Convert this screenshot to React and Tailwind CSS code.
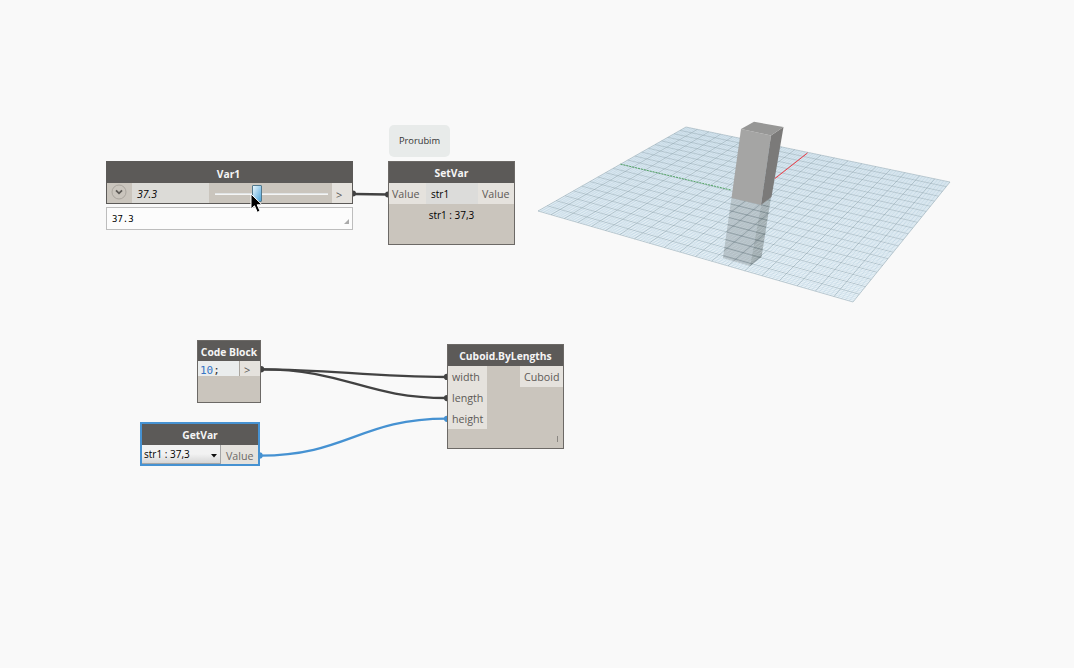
import React from "react";

const FONT = "font-['Open_Sans','Noto_Sans',sans-serif]";

// Projective map from the unit square onto the ground plane's four corners.
const A = [686, 127], B = [950, 182], C = [853, 302], D = [538, 211];
const sx = A[0] - B[0] + C[0] - D[0], sy = A[1] - B[1] + C[1] - D[1];
const dx1 = B[0] - C[0], dx2 = D[0] - C[0], dy1 = B[1] - C[1], dy2 = D[1] - C[1];
const det = dx1 * dy2 - dx2 * dy1;
const g = (sx * dy2 - dx2 * sy) / det, h = (dx1 * sy - sx * dy1) / det;
function project(u, v) {
  const w = g * u + h * v + 1;
  const x = ((B[0] - A[0] + g * B[0]) * u + (D[0] - A[0] + h * D[0]) * v + A[0]) / w;
  const y = ((B[1] - A[1] + g * B[1]) * u + (D[1] - A[1] + h * D[1]) * v + A[1]) / w;
  return x.toFixed(2) + " " + y.toFixed(2);
}
function gridPath(count, skip) {
  let d = "";
  for (let i = 0; i <= count; i++) {
    if (skip && i % skip === 0) continue;
    const t = i / count;
    d += `M${project(t, 0)}L${project(t, 1)}M${project(0, t)}L${project(1, t)}`;
  }
  return d;
}

function Ground() {
  return (
    <svg className="absolute inset-0" width="1074" height="668" viewBox="0 0 1074 668" fill="none">
      <defs>
        <clipPath id="submerged">
          <path d="M731.5 198L761 205L771 197L761.5 257L750 266L723 258Z" />
        </clipPath>
      </defs>
      <path d="M686 127L950 182L853 302L538 211Z" fill="#eaf3f8" />
      <path d={gridPath(100, 5)} stroke="#a9c6d6" strokeWidth=".5" opacity=".65" />
      <path d={gridPath(20, 0)} stroke="#7f98a5" strokeWidth=".7" opacity=".68" />
      <path d={`M${project(0, 0.5)}L731 190`} stroke="#54a666" strokeWidth="1" strokeDasharray="2 1" />
      <path d="M807.5 153L775 178.5" stroke="#f03c46" strokeWidth="1" />
      <path d="M731.5 198L761 205L750 266L723 258Z" fill="#899499" opacity=".55" />
      <path d="M761 205L771 197L761.5 257L750 266Z" fill="#697477" opacity=".6" />
      <g clipPath="url(#submerged)">
        <path d={gridPath(100, 5)} stroke="#dce6ea" strokeWidth=".5" opacity=".6" />
        <path d={gridPath(20, 0)} stroke="#6d7d85" strokeWidth=".7" opacity=".4" />
      </g>
      <path d="M741 129L771 135.5L761 205L731.5 198Z" fill="#a5a5a4" />
      <path d="M771 135.5L783.5 127L771.5 197L761 205Z" fill="#7b7a79" />
      <path d="M741 129L754 121.7L783.5 127L771 135.5Z" fill="#979796" />
    </svg>
  );
}

function Wires() {
  return (
    <svg className="absolute inset-0" width="1074" height="668" viewBox="0 0 1074 668" fill="none" strokeWidth="2.3">
      <g stroke="#424242">
        <path d="M354 194L388 194.5" />
        <path d="M262 369.3C330 369.3 370 377 447 377" />
        <path d="M262 369.3C345 369.3 365 398 447 398" />
      </g>
      <path d="M260 455.7C347 455.7 360 418.7 447 418.7" stroke="#4692d2" />
      <g fill="#424242">
        <path d="M353 190.5a3 3 0 0 1 0 6zM388 191.5a3 3 0 0 0 0 6zM261 366a3.2 3.2 0 0 1 0 6.4zM447 373.8a3 3 0 0 0 0 6.2zM447 395a3 3 0 0 0 0 6.2z" />
      </g>
      <path d="M259.5 452.3a3.2 3.2 0 0 1 0 6.4zM447 415.7a3 3 0 0 0 0 6.2z" fill="#4692d2" />
    </svg>
  );
}

function Header({ children, className }) {
  return (
    <div className={"flex items-center justify-center bg-[#5c5a58] text-[10.3px] font-bold leading-none whitespace-nowrap text-[#f5f5f5] " + className}>
      {children}
    </div>
  );
}

function VarNode() {
  return (
    <div className="absolute left-[106px] top-[161px] w-[247px]">
      <div className="h-[43px] border border-[#5c5a58] bg-[#cac5bd]">
        <Header className="h-[21px] pt-[3px] pr-[2px]">Var1</Header>
        <div className="flex h-5 items-stretch">
          <div className="flex w-[25px] items-center justify-center pr-[2px] pb-[2px]">
            <svg width="16" height="16" viewBox="0 0 16 16" fill="none">
              <circle cx="8" cy="8" r="7" stroke="#aaa59e" />
              <path d="M5 6.3L8 9.3L11 6.3" stroke="#5d5a56" strokeWidth="1.8" />
            </svg>
          </div>
          <div className="flex w-[77px] items-center bg-[#dcdbd7] pl-[5px] pt-[3px] text-[10.5px] italic leading-none text-black">37.3</div>
          <div className="relative flex flex-1 items-center pr-[4px] pl-[6px] pt-px">
            <div className="h-[2px] flex-1 border-b border-[#f5f5f4] bg-[#e1e4e5]" />
            <div className="absolute left-[43px] top-[2px] h-[17px] w-[10px] rounded-[1px] border border-[#52788c] bg-gradient-to-br from-[#e7f6fc] to-[#4ba6db]" />
          </div>
          <div className="flex w-[20px] items-center bg-[#e5e2dd] pl-[4px] pt-[2px] text-[11px] leading-none text-[#555]">&gt;</div>
        </div>
      </div>
      <div className="mt-[3px] flex h-[23px] items-center justify-between border border-[#bdbdbd] bg-[#fcfcfc] pl-[5px] pr-[3px]">
        <span className="pt-[2px] font-['DejaVu_Sans_Mono',monospace] text-[9px] leading-none text-black">37.3</span>
        <svg className="mt-[6px]" width="5" height="5"><path d="M5 0V5H0Z" fill="#aaa" /></svg>
      </div>
    </div>
  );
}

function SetVarNode() {
  return (
    <div className="absolute left-[388px] top-[161px] h-[84px] w-[127px] border border-[#6c6966] bg-[#cac5bd] text-[10.7px] leading-none">
      <Header className="h-[21px] pt-[2px]">SetVar</Header>
      <div className="flex h-[21px] bg-[#e5e2dd] text-[#5d5a57]">
        <div className="flex w-[37px] items-center pl-[3px] pt-[2px]">Value</div>
        <div className="flex w-[52px] items-center bg-[#dcdcda] pl-[5px] pt-px text-[10px] text-black">str1</div>
        <div className="flex flex-1 items-center pl-[4px] pt-[2px]">Value</div>
      </div>
      <div className="pt-[6px] text-center text-[10px] text-black">str1 : 37,3</div>
    </div>
  );
}

function CodeBlock() {
  return (
    <div className="absolute left-[197px] top-[340px] h-[63px] w-[64px] border border-[#6c6966] bg-[#cac5bd] leading-none">
      <Header className="h-[20px] pt-[2px]">Code Block</Header>
      <div className="flex h-[15px]">
        <div className="flex w-[42px] items-center border-r border-[#aaa69f] bg-[#eaeded] pl-[2px] pt-[3px] font-['DejaVu_Sans_Mono',monospace] text-[11px] text-[#333]">
          <span className="text-[#3775c4]">10</span>;
        </div>
        <div className="flex flex-1 items-center bg-[#e5e2dd] pl-[4px] pt-[1px] text-[11px] text-[#555]">&gt;</div>
      </div>
    </div>
  );
}

function GetVarNode() {
  return (
    <div className="absolute left-[140px] top-[422px] h-[44px] w-[120px] border-2 border-[#4692d2] bg-[#e5e2dd] text-[10.7px] leading-none">
      <Header className="h-[21px] pt-px">GetVar</Header>
      <div className="flex h-[19px]">
        <div className="flex w-[79px] items-center justify-between border-r border-b border-[#a5a5a5] bg-gradient-to-b from-[#f2f2f2] from-50% to-[#d6d6d6] pl-[2px] pr-[3px] text-[10px] text-black">
          <span>str1 : 37,3</span>
          <svg className="mt-[4px]" width="6" height="4"><path d="M0 0H6L3 3.5Z" fill="#111" /></svg>
        </div>
        <div className="flex flex-1 items-center pl-[5px] pt-[3px] text-[#6c6966]">Value</div>
      </div>
    </div>
  );
}

function CuboidNode() {
  return (
    <div className="absolute left-[447px] top-[344px] h-[105px] w-[117px] border border-[#6c6966] bg-[#cac5bd] text-[10.7px] leading-none text-[#5d5a57]">
      <Header className="h-[21px] pt-px">Cuboid.ByLengths</Header>
      <div className="flex items-start justify-between">
        <div className="w-[39px] bg-[#e5e2dd]">
          {["width", "length", "height"].map((name) => (
            <div key={name} className="flex h-[21px] items-center pl-[4px] pt-px">{name}</div>
          ))}
        </div>
        <div className="flex h-[21px] w-[43px] items-center bg-[#e5e2dd] pl-[4px] pt-px">Cuboid</div>
      </div>
      <div className="flex justify-end pr-[5px] pt-[7px]"><div className="h-[6px] w-px bg-[#8a8782]" /></div>
    </div>
  );
}

export default function App() {
  return (
    <div className={"relative h-[668px] w-[1074px] overflow-hidden bg-[#f9f9f9] " + FONT}>
      <Ground />
      <div className="absolute left-[389px] top-[125px] flex h-8 w-[61px] items-center justify-center rounded-[5px] bg-[#e8ebea] text-[9.3px] leading-none text-[#333]">Prorubim</div>
      <VarNode />
      <SetVarNode />
      <CodeBlock />
      <GetVarNode />
      <CuboidNode />
      <Wires />
      <svg className="absolute left-[250px] top-[193px]" width="13" height="21" viewBox="0 0 13 21">
        <path d="M1 1V16L4.5 12.8L7.3 19.3L10 18.1L7.2 11.8H12Z" fill="#000" stroke="#fff" strokeWidth="1" />
      </svg>
    </div>
  );
}
